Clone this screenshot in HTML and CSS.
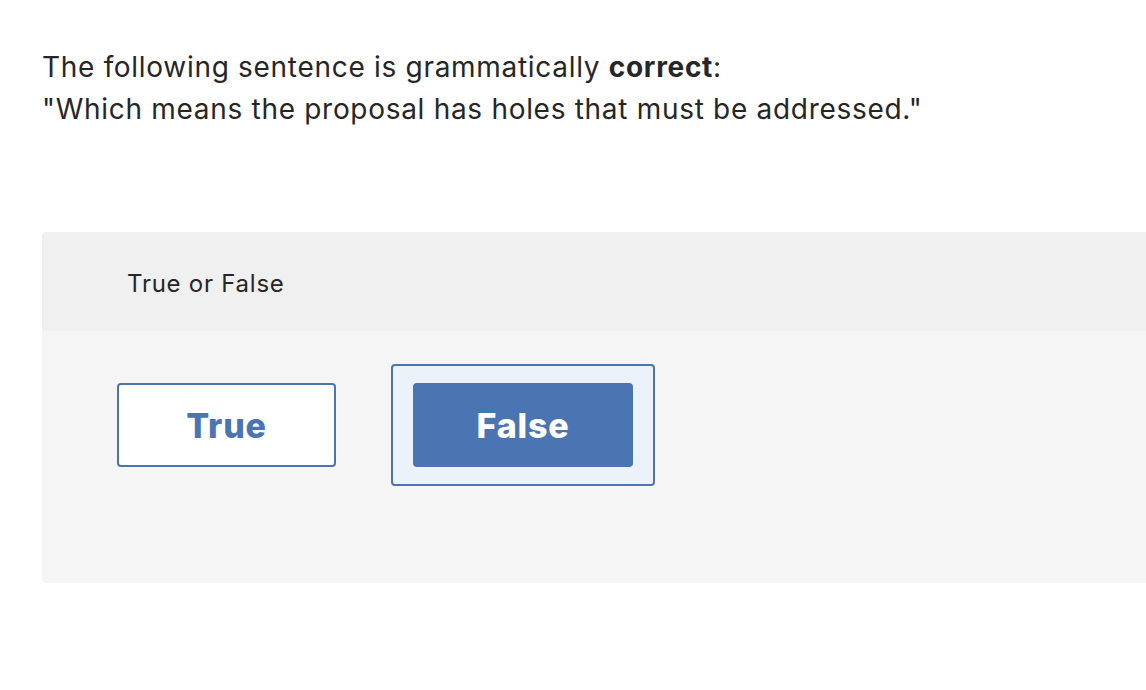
FILE: index.html
```html
<!DOCTYPE html>
<html lang="en">
<head>
<meta charset="utf-8">
<title>True or False</title>
<link rel="stylesheet" href="styles.css">
</head>
<body>
<main class="page">
  <div class="question">
    <p class="line">The following sentence is grammatically <strong>correct</strong>:</p>
    <p class="line">"Which means the proposal has holes that must be addressed."</p>
  </div>
  <section class="card">
    <div class="card-header">True or False</div>
    <div class="card-body">
      <button class="choice">True</button>
      <div class="selected-wrap">
        <button class="choice choice-selected">False</button>
      </div>
    </div>
  </section>
</main>
</body>
</html>
```
FILE: styles.css
```css
html, body {
  margin: 0;
  padding: 0;
  background: #ffffff;
  overflow: hidden;
}
body {
  font-family: "Inter", "Open Sans", sans-serif;
  color: #262626;
}
.page {
  padding: 46px 0 0 42px;
}
.question {
  font-size: 28px;
  line-height: 42px;
  letter-spacing: 0.7px;
}
.line {
  margin: 0;
}
.line strong {
  font-weight: 700;
}
.card {
  margin-top: 102px;
  width: 1140px;
  border-radius: 4px;
  background: #f5f5f5;
  overflow: hidden;
}
.card-header {
  box-sizing: border-box;
  height: 99px;
  background: #f0f0f0;
  padding: 3px 0 0 85px;
  display: flex;
  align-items: center;
  font-size: 24px;
  letter-spacing: 0.75px;
  color: #262626;
}
.card-body {
  display: flex;
  align-items: center;
  gap: 55px;
  padding: 33px 0 97px 75px;
}
.choice {
  box-sizing: border-box;
  width: 219px;
  height: 84px;
  border: 2px solid #4a74b2;
  border-radius: 4px;
  background: #ffffff;
  color: #4a74b2;
  font-family: "Inter", sans-serif;
  font-weight: 800;
  font-size: 34px;
  letter-spacing: 0.8px;
  padding: 0;
  margin: 0;
}
.selected-wrap {
  border: 2px solid #4a74b2;
  border-radius: 4px;
  background: #ebf2fa;
  padding: 17px 20px;
  display: flex;
}
.choice-selected {
  width: 220px;
  background: #4a74b2;
  color: #ffffff;
}
```
